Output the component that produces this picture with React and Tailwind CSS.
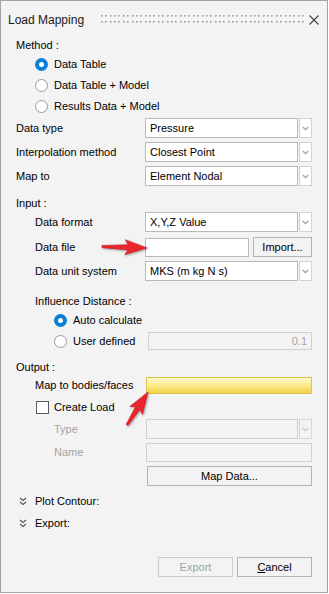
import React from "react";

const Chev = ({ color = "#a0a0a0" }) => (
  <svg width="7" height="5" viewBox="0 0 7 5">
    <polyline points="0.8,1 3.5,3.7 6.2,1" fill="none" stroke={color} strokeWidth="1.3" />
  </svg>
);

const Dropdown = ({ value, disabled, boxW = "w-[153px]" }) => (
  <div className="flex h-[20px] gap-[1px]">
    <div className={`${boxW} h-full border ${disabled ? "border-[#cfcfcf] bg-[#f3f3f3]" : "border-[#b9b9b9] bg-white"} flex items-center px-[4px] text-[11px] text-black`}>
      {value}
    </div>
    <div className={`w-[13px] h-full border ${disabled ? "border-[#d6d6d6] bg-[#f3f3f3]" : "border-[#d2d2d2] bg-white"} flex items-center justify-center`}>
      <Chev color={disabled ? "#c4c4c4" : "#a0a0a0"} />
    </div>
  </div>
);

const Radio = ({ checked }) =>
  checked ? (
    <div className="w-[13px] h-[13px] rounded-full bg-[#0a7fd6] flex items-center justify-center shrink-0">
      <div className="w-[5px] h-[5px] rounded-full bg-white" />
    </div>
  ) : (
    <div className="w-[13px] h-[13px] rounded-full border border-[#9a9a9a] bg-white shrink-0" />
  );

const DoubleChev = () => (
  <svg width="8" height="9" viewBox="0 0 8 9">
    <polyline points="1,1 4,3.5 7,1" fill="none" stroke="#555" strokeWidth="1.1" />
    <polyline points="1,5 4,7.5 7,5" fill="none" stroke="#555" strokeWidth="1.1" />
  </svg>
);

const Btn = ({ children, w, disabled }) => (
  <div className={`${w} h-[20px] border ${disabled ? "border-[#cccccc] text-[#a3a3a3]" : "border-[#b4b4b4] text-black"} bg-[#f3f3f3] flex items-center justify-center text-[11px]`}>
    {children}
  </div>
);

const Arrow = ({ x, y, rot, len }) => (
  <g transform={`translate(${x} ${y}) rotate(${rot})`}>
    <polygon
      points={`${-len},-1 -19,-2.6 -22,-7.5 0,0 -22,7.5 -19,2.6 ${-len},1.2`}
      fill="#e8262c"
      stroke="#d41e24"
      strokeWidth="0.6"
      strokeLinejoin="round"
    />
  </g>
);

export default function App() {
  const dots = [];
  for (let i = 0; i < 47; i++) {
    const dx = Math.round(101 + i * 4.37);
    dots.push(<rect key={`a${i}`} x={dx} y={15} width="1.6" height="1.6" fill="#9e9e9e" />);
    dots.push(<rect key={`b${i}`} x={dx} y={21} width="1.6" height="1.6" fill="#9e9e9e" />);
  }
  return (
    <div className="relative w-[329px] h-[594px] bg-white font-['Liberation_Sans',Arial,sans-serif] text-[11px] text-black leading-none">
      <div className="w-[328px] h-[593px] border border-[#a3a3a3] bg-[#f3f3f3] flex flex-col">
        {/* Title */}
        <div className="flex items-center h-[20px] mt-[9px] pl-[7px]">
          <span className="text-[12px] text-[#1a1a1a]">Load Mapping</span>
        </div>

        {/* Method */}
        <div className="flex items-center h-[18px] mt-[6px] pl-[15px]">Method :</div>
        <div className="flex items-center h-[18px] mt-[1px] pl-[34px] gap-[6px]">
          <Radio checked />
          <span>Data Table</span>
        </div>
        <div className="flex items-center h-[18px] mt-[3px] pl-[34px] gap-[6px]">
          <Radio />
          <span>Data Table + Model</span>
        </div>
        <div className="flex items-center h-[18px] mt-[3px] pl-[34px] gap-[6px]">
          <Radio />
          <span>Results Data + Model</span>
        </div>

        <div className="flex items-center h-[20px] mt-[3px] pl-[15px] pr-[15px]">
          <span className="flex-1">Data type</span>
          <Dropdown value="Pressure" />
        </div>
        <div className="flex items-center h-[20px] mt-[4px] pl-[15px] pr-[15px]">
          <span className="flex-1">Interpolation method</span>
          <Dropdown value="Closest Point" />
        </div>
        <div className="flex items-center h-[20px] mt-[4px] pl-[15px] pr-[15px]">
          <span className="flex-1">Map to</span>
          <Dropdown value="Element Nodal" />
        </div>

        {/* Input */}
        <div className="flex items-center h-[18px] mt-[8px] pl-[15px]">Input :</div>
        <div className="flex items-center h-[20px] mt-[0px] pl-[34px] pr-[15px]">
          <span className="flex-1">Data format</span>
          <Dropdown value="X,Y,Z Value" />
        </div>
        <div className="flex items-center h-[20px] mt-[5px] pl-[34px] pr-[15px]">
          <span className="flex-1">Data file</span>
          <div className="w-[104px] h-[19px] border border-[#b9b9b9] bg-white" />
          <div className="ml-[4px]">
            <Btn w="w-[59px]">Import...</Btn>
          </div>
        </div>
        <div className="flex items-center h-[20px] mt-[4px] pl-[34px] pr-[15px]">
          <span className="flex-1">Data unit system</span>
          <Dropdown value="MKS (m kg N s)" />
        </div>

        <div className="flex items-center h-[18px] mt-[11px] pl-[34px]">Influence Distance :</div>
        <div className="flex items-center h-[18px] mt-[1px] pl-[53px] gap-[6px]">
          <Radio checked />
          <span>Auto calculate</span>
        </div>
        <div className="flex items-center h-[20px] mt-[2px] pl-[53px] pr-[15px] gap-[6px]">
          <Radio />
          <span className="flex-1">User defined</span>
          <div className="w-[164px] h-[18px] border border-[#d0d0d0] bg-[#f3f3f3] flex items-center justify-end pr-[4px] text-[#a3a3a3]">
            0.1
          </div>
        </div>

        {/* Output */}
        <div className="flex items-center h-[18px] mt-[7px] pl-[15px]">Output :</div>
        <div className="flex items-center h-[18px] mt-[0px] pl-[34px] pr-[15px]">
          <span className="flex-1">Map to bodies/faces</span>
          <div className="w-[166px] h-[17px] border border-[#dcc24e] bg-linear-to-b from-[#fff9cc] via-[#fde98a] to-[#f3d243]" />
        </div>
        <div className="flex items-center h-[18px] mt-[4px] pl-[35px] gap-[5px]">
          <div className="w-[13px] h-[13px] border border-[#5a5a5a] bg-white" />
          <span>Create Load</span>
        </div>
        <div className="flex items-center h-[20px] mt-[3px] pl-[53px] pr-[15px]">
          <span className="flex-1 text-[#a3a3a3]">Type</span>
          <Dropdown value="" disabled boxW="w-[152px]" />
        </div>
        <div className="flex items-center h-[20px] mt-[3px] pl-[53px] pr-[15px]">
          <span className="flex-1 text-[#a3a3a3]">Name</span>
          <div className="w-[166px] h-[19px] border border-[#d0d0d0] bg-[#f3f3f3]" />
        </div>
        <div className="flex items-center justify-end h-[20px] mt-[4px] pr-[15px]">
          <Btn w="w-[165px]">Map Data...</Btn>
        </div>

        <div className="flex items-center h-[18px] mt-[6px] pl-[18px] gap-[8px]">
          <DoubleChev />
          <span>Plot Contour:</span>
        </div>
        <div className="flex items-center h-[18px] mt-[4px] pl-[18px] gap-[8px]">
          <DoubleChev />
          <span>Export:</span>
        </div>

        <div className="flex items-center justify-end h-[20px] mt-[25px] pr-[15px] gap-[4px]">
          <Btn w="w-[75px]" disabled>Export</Btn>
          <Btn w="w-[75px]">
            <span><span className="underline">C</span>ancel</span>
          </Btn>
        </div>
      </div>

      {/* title bar decorations and annotations overlay */}
      <svg className="absolute inset-0 pointer-events-none" width="329" height="594" viewBox="0 0 329 594">
        {dots}
        <line x1="309.5" y1="15.5" x2="318.5" y2="24.5" stroke="#444" strokeWidth="1.1" />
        <line x1="318.5" y1="15.5" x2="309.5" y2="24.5" stroke="#444" strokeWidth="1.1" />
        <g style={{ filter: "drop-shadow(1px 1px 1px rgba(0,0,0,0.35))" }}>
          <Arrow x={147} y={248} rot={2} len={45} />
          <Arrow x={148} y={392} rot={-57.5} len={39} />
        </g>
      </svg>
    </div>
  );
}
